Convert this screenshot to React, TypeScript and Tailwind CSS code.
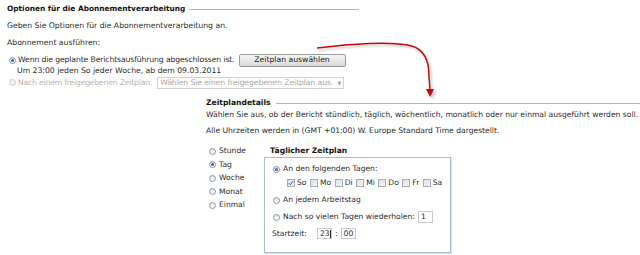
import type { ReactNode } from 'react'

function Radio({ checked = false, disabled = false }: { checked?: boolean; disabled?: boolean }) {
  return (
    <span
      className={`inline-flex items-center justify-center w-[7px] h-[7px] rounded-full border shrink-0 ${
        disabled ? 'border-[#c8cdd4] bg-[#f2f3f5]' : 'border-[#8c96a3] bg-gradient-to-b from-[#dfe3e8] to-white'
      }`}
    >
      {checked && <span className="w-[3px] h-[3px] rounded-full bg-[#1f6fd1]" />}
    </span>
  )
}

function Check({ checked = false }: { checked?: boolean }) {
  return (
    <span className="inline-flex items-center justify-center w-[8px] h-[8px] border border-[#a7adb6] bg-gradient-to-br from-[#dde1e6] to-[#f4f5f7] shrink-0">
      {checked && (
        <svg width="6" height="6" viewBox="0 0 6 6">
          <path d="M0.8 3.2 L2.4 4.8 L5.3 1" fill="none" stroke="#2f62b8" strokeWidth="1" />
        </svg>
      )}
    </span>
  )
}

function Legend({ children, className = '' }: { children: ReactNode; className?: string }) {
  return (
    <div className={`flex items-center gap-[5px] h-[12px] ${className}`}>
      <span className="font-bold text-[#111] shrink-0">{children}</span>
      <span className="h-px flex-1 bg-[#9fb4e6]" />
    </div>
  )
}

const DAYS = ['So', 'Mo', 'Di', 'Mi', 'Do', 'Fr', 'Sa']
const TYPES = ['Stunde', 'Tag', 'Woche', 'Monat', 'Einmal']

export default function App() {
  return (
    <div className="relative w-[640px] h-[255px] overflow-hidden bg-white leading-[10px] text-[#2a2a2a] whitespace-nowrap font-['DejaVu_Sans',Verdana,sans-serif]">
      {/* Abonnementverarbeitung */}
      <div className="pl-[7px] pt-[3px] text-[7.7px]">
        <Legend className="w-[352px] text-[7.4px]">Optionen für die Abonnementverarbeitung</Legend>
        <div className="mt-[6px]">Geben Sie Optionen für die Abonnementverarbeitung an.</div>
        <div className="mt-[7px]">Abonnement ausführen:</div>

        <div className="mt-[5px] flex items-center gap-[2px] pl-[2px] h-[14px]">
          <Radio checked />
          <span className="tracking-[-0.12px]">Wenn die geplante Berichtsausführung abgeschlossen ist.</span>
          <button className="ml-[2px] h-[13px] w-[107px] rounded-[2px] border border-[#9a9a9a] bg-gradient-to-b from-[#f7f7f7] to-[#d9d9d9] text-[7.7px] leading-[10px] text-[#1a1a1a]">
            Zeitplan auswählen
          </button>
        </div>
        <div className="pl-[10px] -mt-[1px]">Um 23:00 jeden So jeder Woche, ab dem 09.03.2011</div>
        <div className="flex items-center gap-[2px] pl-[2px] h-[13px] text-[#b4b4b4]">
          <Radio disabled />
          <span className="tracking-[-0.2px]">Nach einem freigegebenen Zeitplan:</span>
          <span className="ml-[3px] flex items-center h-[12px] w-[187px] border border-[#d2d2d2] px-[2px] text-[#a8a8a8]">
            <span className="flex-1 tracking-[-0.1px]">Wählen Sie einen freigegebenen Zeitplan aus.</span>
            <span className="text-[5px] text-[#999]">▼</span>
          </span>
        </div>
      </div>

      {/* Zeitplandetails */}
      <div className="ml-[206px] mt-[8px] text-[7.6px]">
        <Legend>Zeitplandetails</Legend>
        <div className="mt-[1px]">
          Wählen Sie aus, ob der Bericht stündlich, täglich, wöchentlich, monatlich oder nur einmal ausgeführt werden soll.
        </div>
        <div className="mt-[6px]">Alle Uhrzeiten werden in (GMT +01:00) W. Europe Standard Time dargestellt.</div>

        <div className="mt-[9px] flex">
          <div className="w-[58px] pl-[3px] flex flex-col gap-[3.5px] pt-[1px]">
            {TYPES.map((t) => (
              <div key={t} className="flex items-center gap-[3px] h-[10px]">
                <Radio checked={t === 'Tag'} />
                <span>{t}</span>
              </div>
            ))}
          </div>

          <div className="pt-[1px]">
            <div className="pl-[6px] font-bold text-[#111] h-[10px]">Täglicher Zeitplan</div>
            <div className="mt-[1px] w-[187px] h-[96px] border border-[#a9bbd3] shadow-[1px_1px_1px_rgba(0,0,0,0.12)] pl-[8px] pt-[6px]">
              <div className="flex items-center gap-[3px] h-[10px]">
                <Radio checked />
                <span>An den folgenden Tagen:</span>
              </div>
              <div className="mt-[4px] ml-[14px] flex items-center h-[10px]">
                {DAYS.map((d) => (
                  <span key={d} className="flex items-center gap-[2px] mr-[3.5px]">
                    <Check checked={d === 'So'} />
                    <span>{d}</span>
                  </span>
                ))}
              </div>
              <div className="mt-[7px] flex items-center gap-[3px] h-[10px]">
                <Radio />
                <span>An jedem Arbeitstag</span>
              </div>
              <div className="mt-[6px] flex items-center gap-[3px] h-[12px]">
                <Radio />
                <span>Nach so vielen Tagen wiederholen:</span>
                <span className="w-[15px] h-[12px] border border-[#c9c9c9] flex items-center pl-[2px]">1</span>
              </div>
              <div className="mt-[5px] -ml-[1px] flex items-center h-[11px]">
                <span className="w-[45px]">Startzeit:</span>
                <span className="w-[15px] h-[11px] border border-[#c9c9c9] flex items-center pl-[2px]">
                  23<span className="w-px h-[8px] bg-[#222]" />
                </span>
                <span className="mx-[3px]">:</span>
                <span className="w-[15px] h-[11px] border border-[#c9c9c9] flex items-center pl-[2px]">00</span>
              </div>
            </div>
          </div>
        </div>
      </div>

      {/* roter Pfeil */}
      <svg className="absolute left-0 top-0 pointer-events-none" width="640" height="255">
        <defs>
          <filter id="sh" x="-10%" y="-10%" width="130%" height="130%">
            <feGaussianBlur stdDeviation="1" />
          </filter>
        </defs>
        <g transform="translate(2,2)" opacity="0.35" filter="url(#sh)">
          <path d="M317 48 C350 44 392 41 412 46 C425 50 429 62 429 76 L430 90" fill="none" stroke="#555" strokeWidth="1.5" />
          <polygon points="426,89 434,89 430,97" fill="#555" />
        </g>
        <path d="M317 48 C350 44 392 41 412 46 C425 50 429 62 429 76 L430 90" fill="none" stroke="#c4090f" strokeWidth="1.5" />
        <polygon points="426,89 434,89 430,97" fill="#c4090f" />
      </svg>
    </div>
  )
}
